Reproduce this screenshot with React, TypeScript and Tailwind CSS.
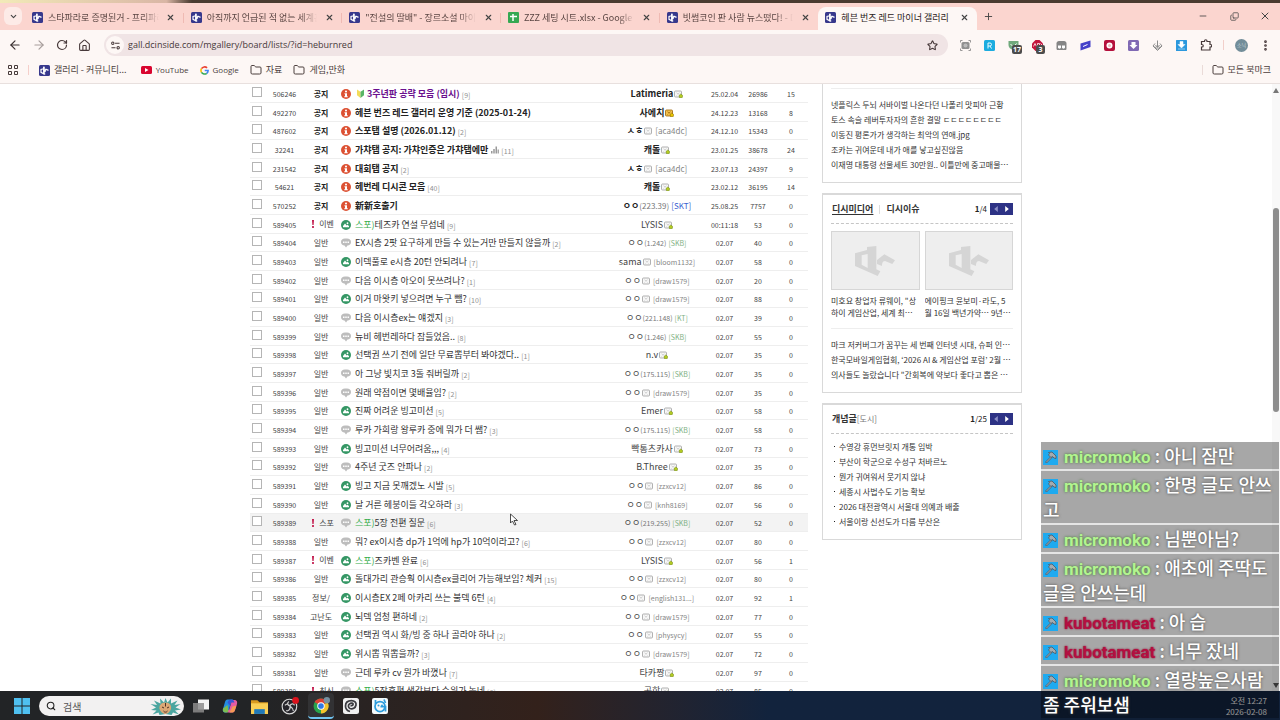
import type { ReactNode } from "react";
import { ArrowLeft, ArrowRight, ChevronDown, Copy, Folder, Home, Minus, MoreVertical, Plus, RotateCw, Search, Star, X } from "lucide-react";

type Kind = "notice" | "image" | "talk";
type Row = {
  no: string;
  cat: string;
  kind: Kind;
  title: string;
  replies?: string;
  nick: string;
  badge?: "fixed" | "semi" | "gold";
  id?: string;
  ip?: string;
  isp?: string;
  date: string;
  views: string;
  rec: string;
  flag?: boolean;
  spoiler?: boolean;
  mark?: "beginner" | "poll";
};

const anon = (no: string, kind: Kind, title: string, replies: string, id: string, views: string, rec = "0", cat = "일반"): Row => ({
  no, cat, kind, title, replies, nick: "ㅇㅇ", badge: "semi", id, date: "02.07", views, rec,
});
const guest = (no: string, kind: Kind, title: string, replies: string, ip: string, isp: string, views: string): Row => ({
  no, cat: "일반", kind, title, replies, nick: "ㅇㅇ", ip, isp, date: "02.07", views, rec: "0",
});
const member = (no: string, kind: Kind, title: string, replies: string, nick: string, views: string, rec = "0"): Row => ({
  no, cat: "일반", kind, title, replies, nick, badge: "fixed", date: "02.07", views, rec,
});
const notice = (no: string, title: string, replies: string | undefined, nick: string, badge: Row["badge"], date: string, views: string, rec: string): Row => ({
  no, cat: "공지", kind: "notice", title, replies, nick, badge, date, views, rec,
});

const rows: Row[] = [
  { ...notice("506246", "3주년판 공략 모음 (임시)", "9", "Latimeria", "fixed", "25.02.04", "26986", "15"), mark: "beginner" },
  notice("492270", "헤븐 번즈 레드 갤러리 운영 기준 (2025-01-24)", undefined, "사에치", "gold", "24.12.23", "13168", "8"),
  { ...notice("487602", "스포탭 설명 (2026.01.12)", "2", "ㅅㅎ", "semi", "24.12.10", "15343", "0"), id: "aca4dc" },
  { ...notice("32241", "가챠탭 공지: 가챠인증은 가챠탭에만", "11", "캐돌", "fixed", "23.01.25", "38678", "24"), mark: "poll" },
  { ...notice("231542", "대회탭 공지", "2", "ㅅㅎ", "semi", "23.07.13", "24397", "9"), id: "aca4dc" },
  notice("54621", "헤번레 디시콘 모음", "40", "캐돌", "fixed", "23.02.12", "36195", "14"),
  { ...notice("570252", "新新호출기", undefined, "ㅇㅇ", undefined, "25.08.25", "7757", "0"), ip: "223.39", isp: "SKT" },
  { ...member("589405", "image", "테즈카 연설 무섭네", "9", "LYSIS", "53"), cat: "이벤", flag: true, spoiler: true, date: "00:11:18" },
  guest("589404", "talk", "EX시층 2팟 요구하게 만들 수 있는거만 만들지 않을까", "2", "1.242", "SKB", "40"),
  { ...anon("589403", "image", "이덱풀로 e시층 20턴 안되려나", "7", "bloom1132", "58"), nick: "sama" },
  anon("589402", "talk", "다음 이시층 아오이 못쓰려나?", "1", "draw1579", "20"),
  anon("589401", "image", "이거 마왓키 넣으려면 누구 뺌?", "10", "draw1579", "88"),
  guest("589400", "talk", "다음 이시층ex는 얘겠지", "3", "221.148", "KT", "39"),
  guest("589399", "talk", "뉴비 헤번레하다 잠들었음..", "8", "1.246", "SKB", "55"),
  member("589398", "image", "선택권 쓰기 전에 일단 무료뽑부터 봐야겠다..", "1", "n.v", "35"),
  guest("589397", "talk", "아 그냥 빛치코 3돌 줘버릴까", "2", "175.115", "SKB", "35"),
  anon("589396", "talk", "원래 약점이면 몇배율임?", "2", "draw1579", "35"),
  member("589395", "image", "진짜 어려운 빙고미션", "5", "Emer", "58"),
  guest("589394", "talk", "루카 가희랑 왕루카 중에 뭐가 더 쌤?", "3", "175.115", "SKB", "58"),
  member("589393", "image", "빙고미션 너무어려움,,,", "4", "빡통츠카사", "73"),
  member("589392", "talk", "4주년 굿즈 안파나", "2", "B.Three", "35"),
  anon("589391", "image", "빙고 지금 못깨겠노 시발", "5", "zzxcv12", "86"),
  anon("589390", "image", "날 거른 헤붕이들 각오하라", "3", "knh8169", "56"),
  { ...guest("589389", "talk", "5장 전편 질문", "6", "219.255", "SKB", "52"), cat: "스포", flag: true, spoiler: true },
  anon("589388", "talk", "뭐? ex이시층 dp가 1억에 hp가 10억이라고?", "6", "zzxcv12", "80"),
  { ...member("589387", "image", "즈카벤 완료", "6", "LYSIS", "56", "1"), cat: "이벤", flag: true, spoiler: true },
  anon("589386", "image", "돌대가리 관승훡 이시층ex클리어 가능해보임? 체커", "15", "zzxcv12", "80"),
  anon("589385", "image", "이시층EX 2페 아카리 쓰는 불덱 6턴", "4", "english131...", "92", "1", "정보/"),
  anon("589384", "image", "뇌덱 엄청 편하네", "2", "draw1579", "77", "0", "고난도"),
  anon("589383", "image", "선택권 역시 화/빙 중 하나 골라야 하나", "2", "physycy", "55"),
  anon("589382", "image", "위시뽑 뭐뽑을까?", "3", "draw1579", "72"),
  member("589381", "talk", "근데 루카 cv 뭔가 바꼈나", "7", "타카짱", "97"),
  { ...member("589380", "talk", "5장후편 생각보다 수위가 높네", "6", "공학", "85"), cat: "최신", flag: true, spoiler: true },
];

function DcIcon() {
  return (
    <svg viewBox="0 0 22 22" className="size-[11px] shrink-0" aria-hidden="true">
      <rect width="22" height="22" rx="3" fill="#37388c" />
      <path d="M9.500 3.500v14L4 14.800V9l5.500-1.500" fill="none" stroke="#fff" strokeWidth="2.400" />
      <path d="M10 3.500v14l2.500 1M11 12l3-3.500 5 2.200M13 11l-1.500 3" fill="none" stroke="#fff" strokeWidth="2.600" />
    </svg>
  );
}

function SheetIcon() {
  return (
    <svg viewBox="0 0 22 22" className="size-[11px] shrink-0" aria-hidden="true">
      <rect width="22" height="22" rx="2" fill="#35a852" />
      <path d="M10 4v14M4 9h14" stroke="#fff" strokeWidth="3" />
    </svg>
  );
}

function KindIcon({ kind }: { kind: Kind }) {
  if (kind === "talk")
    return (
      <svg viewBox="0 0 20 20" className="mx-auto size-[10px]" aria-label="글">
        <path d="M8 1h4c5 0 8 3 8 7s-3 7-7 7l-3 4-3-4c-4 0-7-3-7-7s3-7 8-7z" fill="#bdbdbd" />
        <path d="M4 7h3v3H4zM8.500 7h3v3h-3zM13 7h3v3h-3z" fill="#fff" />
      </svg>
    );
  return kind === "image" ? (
    <svg viewBox="0 0 20 20" className="mx-auto size-[10px]" aria-label="사진">
      <circle cx="10" cy="10" r="10" fill="#359765" />
      <path d="M4 14.500V12l4-5 3.500 4 2-1.500 2.500 3v2z" fill="#fff" />
      <circle cx="13" cy="6.500" r="1.800" fill="#fff" />
    </svg>
  ) : (
    <svg viewBox="0 0 20 20" className="mx-auto size-[10px]" aria-label="공지">
      <circle cx="10" cy="10" r="10" fill="#dc5133" />
      <circle cx="10" cy="5" r="2.100" fill="#fff" />
      <path d="M7 8.300h5v6h1.500v2.200H6.500v-2.200H8v-3.900H7z" fill="#fff" />
    </svg>
  );
}

function NickBadge({ type }: { type: "fixed" | "semi" | "gold" }) {
  const gold = type === "gold";
  return (
    <svg viewBox="0 0 18 16" className="ml-px h-[8px] w-[9px] shrink-0" aria-hidden="true">
      <rect x="1" y="2" width="14" height="12" rx="2" fill={gold ? "#f2c04c" : "#f7f7f7"} stroke={gold ? "#a06a10" : "#a3a3a3"} strokeWidth="1.700" />
      <path d="M5 5.500l3 2.500 3-2.500M5 11l1.500-1.500M11 11L9.500 9.500" fill="none" stroke={gold ? "#8a5200" : "#bdbdbd"} strokeWidth="1.300" />
      {type !== "semi" && <path d="M13.500 8l4 3-1.200 4.500h-5.200L10 11z" fill={gold ? "#e7c500" : "#b4cb22"} stroke={gold ? "#806000" : "#6b8512"} strokeWidth="1" />}
    </svg>
  );
}

function PostRow({ row }: { row: Row }) {
  const isNotice = row.kind === "notice";
  const cell = "h-full border-b border-[#eeeeee] p-0 pt-px text-center align-middle";
  return (
    <tr className={`h-[19px] leading-[14px] nth-[3n]:h-[18px] ${row.no === "589389" ? "bg-[#f3f3f3]" : "hover:bg-[#f3f3f3]"}`}>
      <td className="h-full border-b border-[#eeeeee] p-0 align-middle">
        <input type="checkbox" aria-label={`${row.no} 선택`} className="mx-auto mb-[3px] block size-[10px] appearance-none border border-[#b5b5b5] bg-white" />
      </td>
      <td className={`${cell} text-[7px]`}>{row.no}</td>
      <td className={`${cell} whitespace-nowrap text-[8px] ${isNotice ? "font-bold text-[#222]" : ""}`}>
        <span className={`inline-flex items-center gap-[5px] ${row.flag ? "pl-[4px]" : ""}`}>
          {row.flag && (
            <svg viewBox="0 0 4 16" className="h-[8px] w-[2px]" aria-hidden="true">
              <path d="M0 0h4l-.8 10H.8zM.3 12h3.400v4H.3z" fill="#c2184b" />
            </svg>
          )}
          {row.cat}
        </span>
      </td>
      <td className={cell}>
        <KindIcon kind={row.kind} />
      </td>
      <td className="border-b border-[#eeeeee] p-0 pt-px align-middle">
        <span className="flex items-center whitespace-nowrap text-[9px]">
          {row.mark === "beginner" && (
            <svg viewBox="0 0 16 20" className="mr-[3px] ml-[2px] h-[9px] w-[7px]" aria-hidden="true">
              <path d="M0 1l8 5v14L0 14z" fill="#f2dc5a" />
              <path d="M16 1L8 6v14l8-6z" fill="#58b566" />
            </svg>
          )}
          <a href="#post" className={`${isNotice ? "font-bold" : ""} ${row.mark === "beginner" ? "text-[#6a0f8e]" : isNotice ? "text-[#222]" : "text-[#333]"}`}>
            {row.spoiler && <span className="text-[#36ad4c]">스포)</span>}
            {row.title}
          </a>
          {row.mark === "poll" && (
            <svg viewBox="0 0 16 16" className="ml-[3px] size-[8px]" aria-hidden="true">
              <path d="M0 10h3v5H0zM4.500 6h3v9h-3zM9 1h3v14H9zM13.200 7h2.500v8h-2.500z" fill="#999" />
            </svg>
          )}
          {row.replies && <a href="#replies" className="ml-[2px] pt-[2px] text-[7px] text-[#8f8f8f]">[{row.replies}]</a>}
        </span>
      </td>
      <td className={cell}>
        <span className="flex items-center justify-center whitespace-nowrap text-[9px]">
          <span className={isNotice ? "font-bold text-[#222]" : ""}>{row.nick}</span>
          {row.badge && <NickBadge type={row.badge} />}
          {row.id && <span className={`ml-[2px] text-[#858585] ${isNotice ? "text-[8px]" : "text-[7px]"}`}>[{row.id}]</span>}
          {row.ip && <span className={`text-[#777] ${isNotice ? "text-[8px]" : "text-[7px]"}`}>({row.ip})</span>}
          {row.isp && <span className={isNotice ? "ml-[2px] text-[8px] text-[#3a5fd0]" : "ml-[2px] text-[7px] text-[#7fb184]"}>[{row.isp}]</span>}
        </span>
      </td>
      <td className={`${cell} text-[7px]`}>{row.date}</td>
      <td className={`${cell} text-[7px]`}>{row.views}</td>
      <td className={`${cell} text-[7px]`}>{row.rec}</td>
    </tr>
  );
}

const tabs = [
  "스타파라로 증명된거 - 프리파라 갤러리",
  "아직까지 언급된 적 없는 세계관 - 갤러리",
  "\"전설의 딸배\" - 장르소설 마이너 갤러리",
  "ZZZ 세팅 시트.xlsx - Google Sheets",
  "빗썸코인 판 사람 뉴스떴다! - DC 갤러리",
  "헤븐 번즈 레드 마이너 갤러리",
];

function TabStrip() {
  return (
    <div className="flex h-[27px] shrink-0 items-end bg-[#fbd5cf] pl-1">
      <button aria-label="탭 검색" className="mb-[5px] grid size-[18px] place-items-center rounded-md bg-[#fdebe7]">
        <ChevronDown className="size-[9px]" strokeWidth={3} />
      </button>
      <div className="ml-[3px] flex h-[23px] w-[952px] min-w-0">
        {tabs.map((t, i) => {
          const active = i === 5;
          return (
            <div key={t} className={`relative flex min-w-0 flex-1 items-center pr-[7px] pb-[2px] pl-[7px] ${active ? "rounded-t-lg bg-[#fdf7f5]" : ""}`}>
              {i === 3 ? <SheetIcon /> : <DcIcon />}
              <a href="#tab" className={`ml-[5px] min-w-0 flex-1 overflow-hidden text-[9px] whitespace-nowrap ${active ? "text-[#2a2020]" : "mask-r-from-85% text-[#5a4542]"}`}>
                {t}
              </a>
              <button aria-label="탭 닫기" className="ml-[6px] grid size-[12px] place-items-center">
                <X className="size-[9px]" strokeWidth={3} />
              </button>
              {i < 4 && <span className="absolute top-[6px] right-0 h-[10px] w-px bg-[#efbab3]" />}
            </div>
          );
        })}
      </div>
      <button aria-label="새 탭" className="mb-[7px] ml-[4px] grid size-[14px] place-items-center">
        <Plus className="size-[11px]" />
      </button>
      <div className="mb-[7px] ml-auto flex gap-[17px] pr-[8px]">
        <button aria-label="최소화" className="grid size-[14px] place-items-center"><Minus className="size-[10px]" /></button>
        <button aria-label="이전 크기로" className="grid size-[14px] place-items-center"><Copy className="size-[9px] -scale-x-100 rotate-180" /></button>
        <button aria-label="닫기" className="grid size-[14px] place-items-center"><X className="size-[12px]" /></button>
      </div>
    </div>
  );
}

const extensions: { name: string; icon: ReactNode; count?: string }[] = [
  { name: "캡처", icon: <><rect x="3" y="4" width="16" height="14" rx="3" fill="#909090" /><path d="M1 5V1h4M17 1h4v4M21 17v4h-4M5 21H1v-4" fill="none" stroke="#777" strokeWidth="1.500" /><circle cx="11" cy="11" r="4" fill="#bbb" /></> },
  { name: "리더", icon: <><rect width="22" height="22" rx="3" fill="#1cacdf" /><path d="M8 17V6h4a3 3 0 0 1 0 6H8m4 0l3 5" fill="none" stroke="#e8fbff" strokeWidth="2" /></> },
  { name: "차단기", icon: <><path d="M1 2h20v8c0 6-5 9-10 11C5 18 1 15 1 10z" fill="#70a97c" /><path d="M5 8l6 6 6-7" fill="none" stroke="#fff" strokeWidth="2" /></>, count: "17" },
  { name: "광고 차단", icon: <><path d="M7 0h8l7 7v8l-7 7H7l-7-7V7z" fill="#c2153d" /><path d="M3 13l3-6 3 6M11 7v7h4v-7zM17 7l3 3-3 4" fill="none" stroke="#fff" strokeWidth="1.500" /></>, count: "3" },
  { name: "스크립트", icon: <><path d="M6 2h10c3 0 5 2 5 5v10c0 2-1 3-3 3H4c-2 0-3-1-3-3V7c0-3 2-5 5-5z" fill="#858585" /><path d="M4 11h6v4c0 3-6 3-6 0zM12 11h6v4c0 3-6 3-6 0z" fill="#fff" /></> },
  { name: "도구", icon: <><path d="M1 7L21 1v13L1 21z" fill="#4541c9" /><path d="M6 13l9-4" stroke="#fff" strokeWidth="2" /></> },
  { name: "녹화", icon: <><rect width="22" height="22" rx="4" fill="#b4103c" /><circle cx="11" cy="11" r="6" fill="#fff" /><circle cx="11" cy="11" r="3" fill="#f3b6c0" /></> },
  { name: "내려받기", icon: <><rect width="22" height="22" rx="3" fill="#8069b4" /><path d="M7 4h8v6h4l-8 8-8-8h4z" fill="#fff" /></> },
  { name: "저장", icon: <><path d="M11 1v13M7 10l4 5 4-5M6 7L2 12l9 9 9-9-4-5M5 13l6 5 6-5" fill="none" stroke="#8b8b8b" strokeWidth="2" /></> },
  { name: "다운로더", icon: <><rect width="22" height="22" rx="1" fill="#2b98dd" /><path d="M8 3h6v6h4l-7 7-7-7h4zM4 18h14" fill="#fff" stroke="#fff" /></> },
];

function Toolbar() {
  return (
    <div className="flex h-[30px] shrink-0 items-center bg-[#fdf7f5] pr-2 pl-2 text-[#47393a]">
      <div className="flex items-center gap-[10px]">
        <button aria-label="뒤로"><ArrowLeft className="size-[14px] text-[#3b3131]" strokeWidth={2} /></button>
        <button aria-label="앞으로"><ArrowRight className="size-[14px] text-[#a79e9c]" strokeWidth={2} /></button>
        <button aria-label="새로고침"><RotateCw className="size-[12px]" strokeWidth={2.400} /></button>
        <button aria-label="홈"><Home className="size-[13px]" /></button>
      </div>
      <div className="ml-[13px] flex h-[22px] min-w-0 flex-1 items-center rounded-full bg-[#f0e4e5] pr-[10px] pl-[2px]">
        <button aria-label="사이트 정보" className="grid size-[18px] shrink-0 place-items-center rounded-full bg-[#fdf7f5]">
          <svg viewBox="0 0 20 20" className="size-[9px]" fill="none" stroke="#47393a" strokeWidth="2.400">
            <circle cx="4" cy="5" r="2.600" /><path d="M9 5h10M1 15h9" /><circle cx="16" cy="15" r="2.600" />
          </svg>
        </button>
        <input aria-label="주소" defaultValue="gall.dcinside.com/mgallery/board/lists/?id=heburnred" className="ml-[4px] min-w-0 flex-1 bg-transparent font-['Open_Sans',sans-serif] text-[9px] outline-none" />
        <button aria-label="북마크에 추가"><Star className="size-[11px]" strokeWidth={2.400} /></button>
      </div>
      <div className="ml-[12px] flex items-center gap-[13px]">
        {extensions.map((e) => (
          <button key={e.name} aria-label={e.name} className="relative">
            <svg viewBox="0 0 22 22" className="size-[11px]">{e.icon}</svg>
            {e.count && (
              <span className="absolute top-[5px] left-[4px] min-w-[9px] rounded-[2px] bg-[#4c4c4c] px-px text-center font-['Open_Sans',sans-serif] text-[7px] leading-[9px] font-bold text-white">{e.count}</span>
            )}
          </button>
        ))}
        <button aria-label="확장 프로그램">
          <svg viewBox="0 0 24 24" className="size-[12px]" fill="none" stroke="#47393a" strokeWidth="2.400">
            <path d="M3 5h6V4a2.500 2.500 0 0 1 5 0v1h6v6h1a2.500 2.500 0 0 1 0 5h-1v6H3v-6h1a2.500 2.500 0 0 0 0-5H3z" />
          </svg>
        </button>
      </div>
      <span className="mx-[11px] h-[10px] w-px bg-[#f2cfca]" />
      <button aria-label="프로필" className="grid size-[13px] place-items-center rounded-full bg-[#728d99] text-[5px] text-[#c5d4da]">소닉</button>
      <button aria-label="메뉴" className="ml-[11px]"><MoreVertical className="size-[13px]" strokeWidth={3} /></button>
    </div>
  );
}

function Bookmarks() {
  return (
    <nav aria-label="북마크" className="flex h-[24px] shrink-0 items-center border-b border-[#e8e0de] bg-[#fdf7f5] pr-[9px] pb-[3px] pl-[8px] text-[9px] text-[#4b3e3d]">
      <button aria-label="앱">
        <svg viewBox="0 0 20 20" className="size-[10px]" fill="none" stroke="#473b3b" strokeWidth="2">
          <path d="M1 1h6v6H1zM13 1h6v6h-6zM1 13h6v6H1zM13 13h6v6h-6z" />
        </svg>
      </button>
      <span className="mx-[10px] h-[10px] w-px bg-[#f5cfca]" />
      <div className="flex items-center gap-[11px]">
        <a href="#gallery" className="flex items-center gap-[4px]"><DcIcon />갤러리 - 커뮤니티...</a>
        <a href="#youtube" className="ml-[3px] flex items-center gap-[4px] font-['Open_Sans',sans-serif] text-[8px]">
          <svg viewBox="0 0 22 16" className="h-[8px] w-[11px]"><rect width="22" height="16" rx="3" fill="#d9052f" /><path d="M8 4l7 4-7 4z" fill="#fff" /></svg>
          YouTube
        </a>
        <a href="#google" className="flex items-center gap-[4px] font-['Open_Sans',sans-serif] text-[8px]">
          <svg viewBox="0 0 20 20" className="size-[9px]" fill="none" strokeWidth="3.600">
            <path d="M3.300 6A8 8 0 0 1 15.700 4.300" stroke="#ea4335" /><path d="M3.300 14a8 8 0 0 1 0-8" stroke="#fbbc05" /><path d="M15 16.200A8 8 0 0 1 3.300 14" stroke="#34a853" /><path d="M10.500 10H18a8 8 0 0 1-3 6.200" stroke="#4285f4" />
          </svg>
          Google
        </a>
        <a href="#data" className="flex items-center gap-[4px]"><Folder className="size-[12px]" />자료</a>
        <a href="#game" className="flex items-center gap-[4px]"><Folder className="size-[12px]" />게임,만화</a>
      </div>
      <span className="mr-[9px] ml-auto h-[10px] w-px bg-[#eadbd8]" />
      <a href="#all" className="flex items-center gap-[4px]"><Folder className="size-[12px]" />모든 북마크</a>
    </nav>
  );
}

function Pager({ now, total }: { now: string; total: string }) {
  return (
    <div className="ml-auto flex items-center text-[8px] leading-[12px] font-normal text-[#222]">
      <b>{now}</b><span>/{total}</span>
      <span className="ml-[3px] flex h-[12px] w-[23px] items-center justify-around bg-[#2d3285]">
        <button aria-label="이전"><svg viewBox="0 0 6 10" className="h-[6px] w-[4px]"><path d="M6 0v10L0 5z" fill="#8b8ec6" /></svg></button>
        <button aria-label="다음"><svg viewBox="0 0 6 10" className="h-[6px] w-[4px]"><path d="M0 0v10l6-5z" fill="#fff" /></svg></button>
      </span>
    </div>
  );
}

function NewsCard({ text }: { text: string }) {
  return (
    <a href="#news" className="min-w-0 flex-1">
      <span className="grid h-[59px] place-items-center border border-[#d6d6d6] bg-[#eeeeee]">
        <svg viewBox="0 0 120 90" className="h-[30px] w-[40px]" aria-hidden="true">
          <path d="M36 3L64 0v70l12 6-8 14L0 60V22l36-10zM20 28v28l18 10V24z" fill="#d5d5d5" fillRule="evenodd" />
          <path d="M66 42l22-17 32 18-8 11-22-9c-8 1-9 8-9 15L66 54z" fill="#d5d5d5" />
        </svg>
      </span>
      <span className="mt-[5px] mr-[2px] line-clamp-2 leading-[12px] break-all">{text}</span>
    </a>
  );
}

function Sidebar() {
  const box = "border border-[#d9d9d9] bg-white px-[8px]";
  const list = "leading-[15px]";
  return (
    <aside className="w-[200px] shrink-0 text-[8px] text-[#333]">
      <section className={`${box} h-[99px] border-t-0 pt-[4px]`}>
        <ul className={`${list} border-t border-[#eeeeee] pt-[8px]`}>
          {["넷플릭스 두뇌 서바이벌 나온다던 나폴리 맛피아 근황", "토스 속슬 레버투자자의 흔한 결말 ㄷㄷㄷㄷㄷㄷㄷㄷ", "이동진 평론가가 생각하는 최악의 연애.jpg", "조카는 귀여운데 내가 애를 낳고싶진않음", "이재명 대통령 선물세트 30만원.. 이틀만에 중고매물로 등장"].map((t) => (
            <li key={t} className="truncate"><a href="#best">{t}</a></li>
          ))}
        </ul>
      </section>
      <section className={`${box} mt-[10px] h-[200px] border-t-2`}>
        <header className="flex h-[29px] items-center border-b border-dashed border-[#c5c5c5] text-[9px] font-bold">
          <button className="ml-px underline underline-offset-2">디시미디어</button>
          <span className="mx-[6px] h-[9px] w-px bg-[#ddd]" />
          <button>디시이슈</button>
          <Pager now="1" total="4" />
        </header>
        <div className="mt-[7px] flex gap-[5px]">
          <NewsCard text={"미호요 창업자 류웨이, \"상하이 게임산업, 세계 최고 수준으로 성장\""} />
          <NewsCard text="에이핑크 윤보미·라도, 5월 16일 백년가약… 9년 열애 끝에 결혼" />
        </div>
        <ul className={`${list} mt-[9px] border-t border-[#eeeeee] pt-[8px]`}>
          {["마크 저커버그가 꿈꾸는 세 번째 인터넷 시대, 슈퍼 인텔리전스", "한국모바일게임협회, ‘2026 AI & 게임산업 포럼’ 2월 개최 예정", "의사들도 놀랐습니다 \"간회복에 약보다 좋다고 뽑은 음식\""].map((t) => (
            <li key={t} className="truncate"><a href="#issue">{t}</a></li>
          ))}
        </ul>
      </section>
      <section className={`${box} mt-[10px] h-[137px] border-t-2`}>
        <header className="flex h-[29px] items-center border-b border-dashed border-[#c5c5c5]">
          <h2 className="ml-px text-[9px] font-bold">개념글<span className="text-[8px] font-normal text-[#777]">[도시]</span></h2>
          <Pager now="1" total="25" />
        </header>
        <ul className={`${list} pt-[5px] pl-[3px]`}>
          {["수영강 휴먼브릿지 개통 임박", "부산이 학군으로 수성구 처바르노", "뭔가 귀여워서 웃기지 않냐", "세종시 사법수도 기능 확보", "2026 대전광역시 서울대 의예과 배출", "서울이랑 신선도가 다름 부산은"].map((t) => (
            <li key={t} className="flex items-center gap-[4px]"><span className="size-px bg-[#222]" /><a href="#concept">{t}</a></li>
          ))}
        </ul>
      </section>
    </aside>
  );
}

const messages = [
  { user: "micromoko", text: "아니 잠만" },
  { user: "micromoko", text: "한명 글도 안쓰고" },
  { user: "micromoko", text: "님뿐아님?" },
  { user: "micromoko", text: "애초에 주딱도 글을 안쓰는데" },
  { user: "kubotameat", text: "아 습" },
  { user: "kubotameat", text: "너무 잤네" },
  { user: "micromoko", text: "열량높은사람 좀 주워보샘" },
];

function ChatOverlay() {
  return (
    <ul className="absolute right-[1px] bottom-0 z-20 flex w-[238px] flex-col gap-[2px] bg-black/10 pb-[2px] text-[18px] leading-[25px] font-medium text-white">
      {messages.map((m) => (
        <li key={m.text} className="bg-black/27 px-[2px] py-px text-shadow-[0_0_3px_#444]">
          <svg viewBox="0 0 30 30" className="mr-[6px] inline-block size-[15px] align-[-2px]" aria-label="매니저">
            <rect width="30" height="30" fill="#1eaaf0" />
            <path d="M5 24L17 12l2 2L7 26z" fill="#a3abb0" stroke="#48525c" strokeWidth="1.500" />
            <path d="M11 5l7-1 8 8v5l-4-1-3-3-3 2-5-5 2-3z" fill="#a3abb0" stroke="#48525c" strokeWidth="1.500" />
          </svg>
          <b className={m.user === "kubotameat" ? "font-['Roboto',sans-serif] text-[17px] leading-[17px] text-[#b40f40] text-shadow-[0_0_2px_#80002a]" : "font-['Roboto',sans-serif] text-[17px] leading-[17px] text-[#b2f58f] text-shadow-[0_0_3px_#3f7030]"}>{m.user}</b>
          {" : "}{m.text}
        </li>
      ))}
    </ul>
  );
}

function Taskbar() {
  return (
    <footer className="flex h-[29px] shrink-0 items-center bg-linear-to-r from-[#222426] from-20% via-[#33211b] via-42% to-[#12233d] to-60% pt-px pr-[13px] pl-[14px]">
      <button aria-label="시작">
        <svg viewBox="0 0 32 32" className="size-[16px]"><path d="M0 0h15v15H0zM17 0h15v15H17zM0 17h15v15H0zM17 17h15v15H17z" fill="#4fc0f0" /></svg>
      </button>
      <label className="ml-[9px] flex h-[20px] w-[145px] items-center rounded-full bg-[#f2f1f1] pl-[7px]">
        <Search className="size-[10px] text-[#222]" strokeWidth={2.600} />
        <input aria-label="검색" placeholder="검색" className="ml-[7px] w-[80px] bg-transparent text-[10px] outline-none placeholder:text-[#555]" />
        <svg viewBox="0 0 60 34" className="ml-[7px] h-[17px] w-[31px]" aria-hidden="true">
          <path d="M30 32L18 34l-2-5-12 4 8-8-11-1 10-5L0 12l13 2L7 5l13 6L19 1l8 8 3-9 4 9 7-8v10l13-6-6 9 12-2-10 7 11 4-12 2 8 8-12-4-3 5z" fill="#4ba6a0" />
          <path d="M30 9c9 0 12 7 11 12s-6 11-11 11-11-5-12-11 3-12 12-12z" fill="#dba875" />
          <path d="M23 18l4 2M37 18l-4 2M26 26c2 3 6 3 8 0M30 10v7" fill="none" stroke="#4c3024" strokeWidth="2" />
        </svg>
      </label>
      <div className="ml-[9px] flex items-center gap-[13px]">
        <button aria-label="작업 보기"><svg viewBox="0 0 32 32" className="size-[16px]"><rect x="10" y="3" width="22" height="20" fill="#f3f3f3" /><rect x="0" y="10" width="22" height="19" fill="#8c8c8c" fillOpacity=".85" /></svg></button>
        <button aria-label="코파일럿">
          <svg viewBox="0 0 32 32" className="size-[16px]">
            <path d="M11 3h9c4 0 4 3 5 6h-7l-5 17c-1 3-3 3-5 3-6 0-7-3-6-7l4-14c1-3 2-5 5-5z" fill="#258de0" />
            <path d="M21 29h-9c-3 0-4-2-5-5h7l5-16c1-3 3-4 5-4 6 0 7 4 6 8l-4 12c-1 3-2 5-5 5z" fill="#e55ba2" />
            <path d="M19 3c4 0 5 3 6 6h-7l-2 7-5-7c2-4 3-6 8-6z" fill="#3857d6" /><path d="M2 21l9-7 2 12c-1 3-3 3-5 3-6 0-7-4-6-8z" fill="#7dbd52" /><path d="M21 17l8-2-3 9c-1 3-2 5-5 5h-6z" fill="#f49a55" />
          </svg>
        </button>
        <button aria-label="파일 탐색기"><svg viewBox="0 0 32 32" className="size-[17px]"><path d="M0 4h12l4 4h16v22H0z" fill="#d99b20" /><path d="M0 10h32v20H0z" fill="#f9cf55" /><path d="M6 21h20v9H6z" fill="#2079b9" /></svg></button>
        <button aria-label="OBS">
          <svg viewBox="0 0 32 32" className="size-[18px]"><circle cx="15" cy="17" r="13" fill="#25242a" stroke="#d8d8d8" strokeWidth="2" /><path d="M14 8c-4 3-2 8 2 8M24 15c-1-4-7-4-8 1M9 24c4 2 8-2 7-8M7 15c3-4 7-2 9 1M22 25c0-4-2-6-6-9" fill="none" stroke="#ccc" strokeWidth="2.200" /><circle cx="26" cy="6" r="6" fill="#dc121c" /></svg>
        </button>
        <button aria-label="크롬" className="-mx-1 grid h-[26px] w-[26px] place-items-center rounded border-b-2 border-[#70c5f2] bg-[#323234]">
          <svg viewBox="0 0 32 32" className="size-[17px]"><circle cx="15" cy="17" r="14" fill="#28a34b" /><path d="M15 17L3 9.500A14 14 0 0 1 27 10z" fill="#df4034" /><path d="M15 17l12.500-7A14 14 0 0 1 15 31z" fill="#f4c32c" /><circle cx="15" cy="17" r="7" fill="#fff" /><circle cx="15" cy="17" r="5.300" fill="#2f79e6" /><circle cx="26" cy="6" r="6" fill="#76909f" /></svg>
        </button>
        <button aria-label="클립 스튜디오"><svg viewBox="0 0 32 32" className="size-[16px]"><rect width="32" height="32" rx="5" fill="#f0f0f0" /><path d="M14 27c-4-1-9-5-9-11C5 9 10 5 17 5c6 0 10 4 9 9-1 6-7 9-12 7-4-2-4-7-1-9 3-3 8-2 7 1-1 2-3 3-5 2" fill="none" stroke="#3b3b40" strokeWidth="3.500" /></svg></button>
        <button aria-label="메신저"><svg viewBox="0 0 32 32" className="size-[16px]"><rect width="32" height="32" rx="4" fill="#f4fafb" /><circle cx="16" cy="17" r="10" fill="none" stroke="#2d9ddd" strokeWidth="3.500" /><path d="M7 4v8M24 3l3 7M17 17h10v10" fill="none" stroke="#2d9ddd" strokeWidth="3.500" /><circle cx="13" cy="15" r="2" fill="#2d9ddd" /><circle cx="20" cy="15" r="2" fill="#2d9ddd" /></svg></button>
      </div>
      <div className="ml-auto text-right text-[8px] leading-[11px] text-[#e2e2e2]">오전 12:27<br />2026-02-08</div>
    </footer>
  );
}

export default function App() {
  return (
    <div className="relative flex h-screen flex-col overflow-hidden bg-white font-['Noto_Sans_CJK_KR',sans-serif] text-[#444]">
      <div className="h-[3px] shrink-0 bg-linear-to-r from-[#f2eab8] via-[#d9b6a5] via-13% to-[#4a3b30] to-15%" />
      <TabStrip />
      <Toolbar />
      <Bookmarks />
      <div className="flex min-h-0 flex-1">
        <main className="relative flex min-w-0 flex-1 justify-center gap-[14px] overflow-hidden">
          <div className="w-[558px] shrink-0">
            <table className="w-full table-fixed border-separate border-spacing-0">
              <colgroup>
                <col className="w-[14px]" /><col className="w-[41px]" /><col className="w-[32px]" /><col className="w-[18px]" /><col /><col className="w-[100px]" /><col className="w-[35px]" /><col className="w-[32px]" /><col className="w-[34px]" />
              </colgroup>
              <tbody>{rows.map((r) => <PostRow key={r.no} row={r} />)}</tbody>
            </table>
          </div>
          <Sidebar />
          <svg viewBox="0 0 16 24" className="absolute top-[429px] left-[510px] h-[13px] w-[8px]" aria-hidden="true">
            <path d="M1 1v18l4-4 4 8 3-1-4-8h7z" fill="#fff" stroke="#222" strokeWidth="1.600" />
          </svg>
        </main>
        <div className="flex w-2 flex-col items-center bg-[#f8f8f8]">
          <svg viewBox="0 0 10 8" className="mt-[4px] h-[5px] w-[6px]"><path d="M5 0l5 8H0z" fill="#777" /></svg>
          <div className="mt-[115px] h-[204px] w-[6px] rounded-full bg-[#8d8d8d]" />
          <svg viewBox="0 0 10 8" className="mt-auto mb-[3px] h-[5px] w-[6px]"><path d="M5 8l5-8H0z" fill="#555" /></svg>
        </div>
      </div>
      <Taskbar />
      <ChatOverlay />
    </div>
  );
}
